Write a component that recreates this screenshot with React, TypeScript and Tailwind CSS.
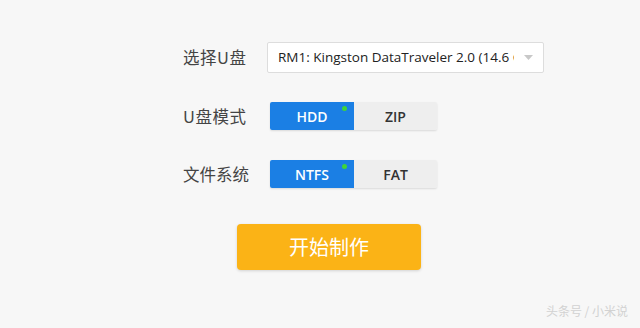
import React from "react";

const cjk = { fontFamily: '"Noto Sans CJK SC", "Noto Sans", sans-serif' };
const latin = { fontFamily: '"Open Sans", "Noto Sans", "Noto Sans CJK SC", sans-serif' };

function Toggle({ a, b }: { a: string; b: string }) {
  return (
    <div className="ml-[3px] flex h-[28px] w-[167px] shadow-[0_1px_2px_rgba(0,0,0,0.12)] rounded-[2px]">
      <div
        className="relative flex w-[84px] items-center justify-center rounded-l-[2px] bg-[#1b7fe4] text-[14px] font-semibold text-white"
        style={latin}
      >
        {a}
        <span className="absolute right-[7px] top-[4px] h-[5px] w-[5px] rounded-full bg-[#3fd43a]" />
      </div>
      <div
        className="flex flex-1 items-center justify-center rounded-r-[2px] bg-[#eeeeee] text-[14px] font-semibold text-[#333]"
        style={latin}
      >
        {b}
      </div>
    </div>
  );
}

export default function App() {
  return (
    <div className="relative h-[328px] w-[640px] overflow-hidden bg-[#f7f7f7]">
      <div className="flex flex-col pl-[183px] pt-[42px]">
        <div className="flex h-[31px] items-center">
          <div className="w-[84px] text-[16.5px] tracking-[0.5px] text-[#444]" style={cjk}>
            选择U盘
          </div>
          <div className="flex h-[31px] w-[277px] items-center rounded-[2px] border border-[#dddddd] bg-white">
            <div
              className="w-[246px] overflow-hidden whitespace-nowrap pl-[10px] text-[13.5px] text-[#222]"
              style={latin}
            >
              RM1: Kingston DataTraveler 2.0 (14.6 GB)
            </div>
            <div className="flex flex-1 items-center justify-center">
              <svg width="9" height="5" viewBox="0 0 9 5">
                <path d="M0 0 L9 0 L4.5 5 Z" fill="#c8c8c8" />
              </svg>
            </div>
          </div>
        </div>

        <div className="mt-[29px] flex h-[28px] items-center">
          <div className="w-[84px] text-[16.5px] tracking-[0.5px] text-[#444]" style={cjk}>
            U盘模式
          </div>
          <Toggle a="HDD" b="ZIP" />
        </div>

        <div className="mt-[30px] flex h-[28px] items-center">
          <div className="w-[84px] text-[16.5px] text-[#444]" style={cjk}>
            文件系统
          </div>
          <Toggle a="NTFS" b="FAT" />
        </div>

        <div className="ml-[54px] mt-[36px] flex h-[46px] w-[184px] items-center justify-center rounded-[4px] bg-[#fbb316] text-[20px] text-white shadow-[0_1px_3px_rgba(0,0,0,0.15)]" style={cjk}>
          开始制作
        </div>
      </div>

      <div className="absolute right-[12px] top-[302px] text-[12px] text-[#d2d2d2]" style={cjk}>
        头条号 / 小米说
      </div>
    </div>
  );
}
